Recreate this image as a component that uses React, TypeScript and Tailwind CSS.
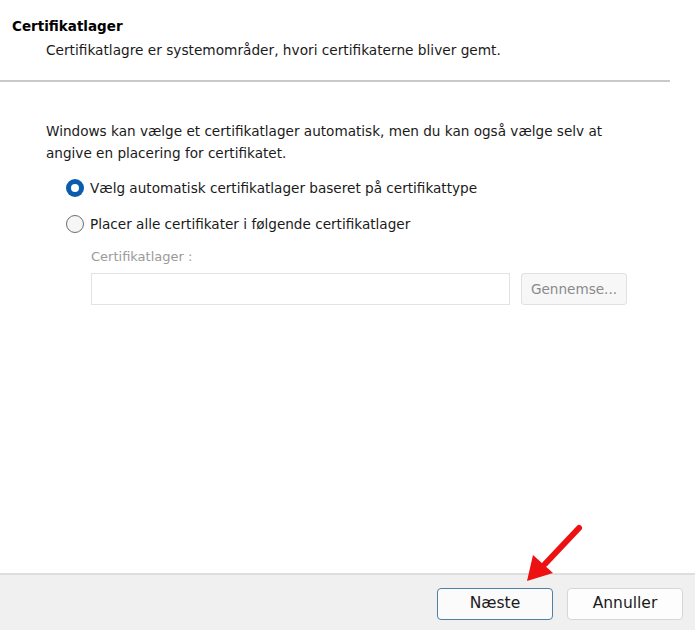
import React from 'react';

const font = { fontFamily: '"DejaVu Sans", Verdana, sans-serif' };

const Radio: React.FC<{ checked?: boolean }> = ({ checked }) =>
  checked ? (
    <span className="w-[18px] h-[18px] rounded-full bg-[#0b5cad] flex items-center justify-center shrink-0">
      <span className="w-[8px] h-[8px] rounded-full bg-white" />
    </span>
  ) : (
    <span className="w-[18px] h-[18px] rounded-full border border-[#6d6d6d] bg-[#f6f6f6] shrink-0" />
  );

const App: React.FC = () => {
  return (
    <div className="relative w-[695px] h-[630px] bg-white flex flex-col text-[#1a1a1a]" style={font}>
      {/* Header */}
      <div className="pt-[16px] h-[80px]">
        <h1 className="pl-[12px] text-[13.5px] font-bold leading-[20px] text-black">Certifikatlager</h1>
        <p className="pl-[46px] mt-[5px] text-[13.7px] leading-[18px]">
          Certifikatlagre er systemområder, hvori certifikaterne bliver gemt.
        </p>
      </div>
      <div className="w-[670px] h-[2px] bg-[#c9c9c9]" />

      {/* Body */}
      <div className="flex-1 pl-[46px] pt-[38px]">
        <p className="text-[13.6px] leading-[22px]">
          Windows kan vælge et certifikatlager automatisk, men du kan også vælge selv at
          <br />
          angive en placering for certifikatet.
        </p>
        <div className="pl-[20px] mt-[15px] flex flex-col gap-[18px] text-[13.6px]">
          <label className="flex items-center gap-[6px] h-[18px]">
            <Radio checked />
            <span>Vælg automatisk certifikatlager baseret på certifikattype</span>
          </label>
          <label className="flex items-center gap-[6px] h-[18px]">
            <Radio />
            <span>Placer alle certifikater i følgende certifikatlager</span>
          </label>
        </div>
        <div className="pl-[45px] mt-[15px]">
          <div className="text-[13px] text-[#9a9a9a] leading-[18px]">Certifikatlager :</div>
          <div className="flex gap-[11px] mt-[7px]">
            <div className="w-[419px] h-[32px] border border-[#e3e3e3] bg-white" />
            <div className="w-[106px] h-[32px] border border-[#e1e1e1] rounded-[3px] bg-[#f7f7f7] flex items-center justify-center text-[13.6px] text-[#8a8a8a]">
              Gennemse...
            </div>
          </div>
        </div>
      </div>

      {/* Footer */}
      <div className="h-[57px] bg-[#f0f0f0] border-t-2 border-[#dedede] flex justify-end items-start pt-[13px] pr-[12px] gap-[14px]">
        <button className="w-[116px] h-[32px] rounded-[4px] border border-[#4f7fa3] bg-[#fbfbfb] text-[15.5px] text-[#1a1a1a]">
          Næste
        </button>
        <button className="w-[116px] h-[32px] rounded-[4px] border border-[#d6d6d6] bg-[#fdfdfd] text-[15.5px] text-[#1a1a1a]">
          Annuller
        </button>
      </div>

      {/* Red annotation arrow */}
      <svg className="absolute left-[520px] top-[520px]" width="70" height="70" viewBox="0 0 70 70">
        <line x1="59" y1="8" x2="25" y2="44" stroke="#ee1111" strokeWidth="6" strokeLinecap="round" />
        <polygon points="7,61 13,35 33,53" fill="#ee1111" />
      </svg>
    </div>
  );
};

export default App;
